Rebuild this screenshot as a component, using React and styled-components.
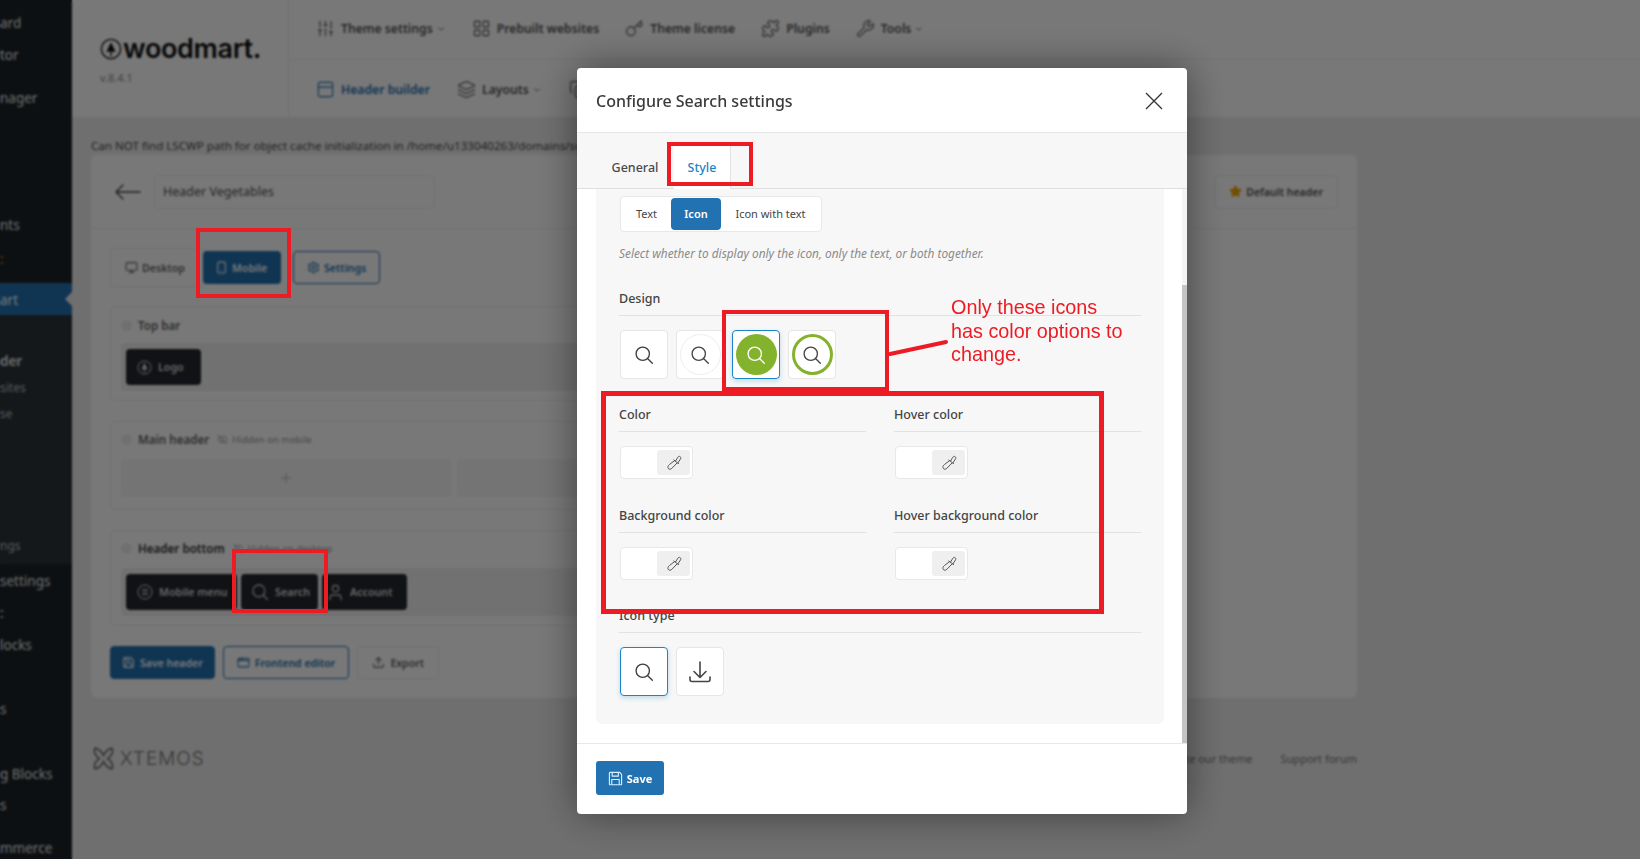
import React from "react";
import styled, { createGlobalStyle } from "styled-components";
import {
  AppWindow,
  ChevronDown,
  Copy,
  EyeOff,
  Key,
  Layers,
  LayoutGrid,
  Monitor,
  PanelTop,
  Plus,
  Puzzle,
  Save,
  Settings,
  SlidersVertical,
  Smartphone,
  Star,
  Upload,
  User,
  Wrench,
} from "lucide-react";

const GlobalStyle = createGlobalStyle`
  html, body {
    margin: 0;
    padding: 0;
    height: 100%;
    overflow: hidden;
    background: #ececec;
  }
  * { box-sizing: border-box; }
  body {
    font-family: "Noto Sans", "Open Sans", sans-serif;
    color: #3d3d3d;
  }
`;

const sideTop = [
  { label: "ard", gap: 13 },
  { label: "tor", gap: 12 },
  { label: "nager", gap: 23 },
  { label: "nts", gap: 107 },
  { label: ":", gap: 14, orange: true },
];
const sideSub = [
  { label: "der", gap: 36, strong: true },
  { label: "sites", gap: 7, small: true },
  { label: "se", gap: 6, small: true },
  { label: "ngs", gap: 112, small: true },
];
const sideBottom = [
  { label: "settings", gap: 7 },
  { label: ":", gap: 12 },
  { label: "locks", gap: 12 },
  { label: "s", gap: 44 },
  { label: "g Blocks", gap: 45 },
  { label: "s", gap: 11 },
  { label: "mmerce", gap: 23 },
];

const Page = styled.div`
  display: flex;
  width: 1640px;
  height: 859px;
  overflow: hidden;
`;

const Sidebar = styled.aside`
  flex: 0 0 72px;
  background: #1d2327;
  color: #e8eaeb;
  font-size: 13.5px;
  overflow: hidden;
`;

const SideItem = styled.div`
  height: 20px;
  line-height: 20px;
  white-space: nowrap;
  margin-top: ${(p) => p.$gap}px;
  font-size: ${(p) => (p.$small ? "12px" : "13.5px")};
  font-weight: ${(p) => (p.$strong ? 600 : 400)};
  color: ${(p) => (p.$orange ? "#d9822b" : p.$small ? "#b8bcc0" : "#e8eaeb")};
`;

const SideActive = styled.div`
  position: relative;
  height: 32px;
  line-height: 35px;
  margin-top: 14px;
  background: #2271b1;
  color: #fff;

  &::after {
    content: "";
    position: absolute;
    right: 0;
    top: 9px;
    border: 7px solid transparent;
    border-right-color: #ececec;
    border-left-width: 0;
  }
`;

const SideSub = styled.div`
  height: 249px;
  padding-bottom: 8px;
  background: #2c3338;
  overflow: hidden;
`;

const Main = styled.main`
  flex: 1;
  min-width: 0;
`;

const TopHeader = styled.header`
  display: flex;
  height: 117px;
  background: #fff;
`;

const Brand = styled.div`
  flex: 0 0 217px;
  padding: 34px 0 0 28px;
  border-right: 1px solid #eee;
`;

const LogoRow = styled.div`
  display: flex;
  align-items: center;
  gap: 1px;
  height: 30px;
  color: #111;
`;

const LogoText = styled.span`
  font-family: Inter, "Noto Sans", sans-serif;
  font-size: 27px;
  font-weight: 600;
  letter-spacing: -0.35px;
  line-height: 30px;
`;

const Version = styled.div`
  margin-top: 6px;
  font-size: 11px;
  line-height: 16px;
  color: #8f8f8f;
`;

const NavColumn = styled.div`
  flex: 1;
  display: flex;
  flex-direction: column;
`;

const NavRow = styled.nav`
  display: flex;
  align-items: center;
  height: ${(p) => p.$height}px;
  padding: ${(p) => (p.$line ? "0 0 2px 27px" : "2px 0 0 27px")};
  gap: ${(p) => p.$gap}px;
  border-bottom: ${(p) => (p.$line ? "1px solid #eee" : "none")};
`;

const NavItem = styled.div`
  display: flex;
  align-items: center;
  gap: 6px;
  font-size: 12.2px;
  font-weight: 600;
  white-space: nowrap;
  color: ${(p) => (p.$active ? "#2271b1" : "#555")};

  & > svg + svg {
    margin-left: -3px;
  }
`;

const Content = styled.div`
  padding: 20px 0 0 19px;
`;

const Notice = styled.div`
  height: 18px;
  line-height: 18px;
  font-size: 11.6px;
  white-space: nowrap;
  color: #4a4a4a;
`;

const BuilderPanel = styled.section`
  width: 1266px;
  background: #fff;
  border-radius: 6px;
`;

const BuilderTop = styled.div`
  display: flex;
  align-items: center;
  height: 74px;
  padding: 0 19px 0 24px;
  border-bottom: 1px solid #eee;
`;

const TitleInput = styled.div`
  width: 281px;
  height: 34px;
  margin-left: 13px;
  padding-left: 8px;
  border: 1px solid #eee;
  border-radius: 4px;
  font-size: 12.5px;
  line-height: 32px;
  color: #555;
`;

const DefaultButton = styled.div`
  display: flex;
  align-items: center;
  gap: 4px;
  height: 34px;
  margin-left: auto;
  padding: 0 14px;
  border: 1px solid #eee;
  border-radius: 4px;
  font-size: 10.5px;
  font-weight: 600;
  color: #555;
`;

const BuilderBody = styled.div`
  padding: 19px 200px 19px 19px;
`;

const ViewTabs = styled.div`
  display: flex;
  align-items: center;
  height: 39px;
`;

const DesktopTab = styled.div`
  display: flex;
  align-items: center;
  gap: 4px;
  width: 96px;
  height: 39px;
  padding-left: 14px;
  border: 1px solid #eee;
  border-radius: 4px;
  font-size: 10.6px;
  font-weight: 600;
  color: #666;
`;

const MobileTab = styled.div`
  display: flex;
  align-items: center;
  gap: 4px;
  width: 78px;
  height: 33px;
  margin-left: -3px;
  padding-left: 12px;
  border-radius: 4px;
  background: #2271b1;
  font-size: 10.6px;
  font-weight: 600;
  color: #fff;
`;

const SettingsTab = styled.div`
  display: flex;
  align-items: center;
  gap: 4px;
  width: 87px;
  height: 33px;
  margin-left: 12px;
  padding-left: 13px;
  border: 1px solid #2271b1;
  border-radius: 4px;
  font-size: 10.6px;
  font-weight: 600;
  color: #2271b1;
`;

const Section = styled.div`
  margin-top: ${(p) => p.$gap}px;
  padding: ${(p) => p.$top}px 10px ${(p) => p.$bottom}px;
  border: 1px solid #eee;
  border-radius: 6px;
`;

const SectionTitle = styled.div`
  display: flex;
  align-items: center;
  height: 20px;
  font-size: 11.6px;
  font-weight: 600;
  color: ${(p) => (p.$dark ? "#333" : "#666")};
`;

const Dot = styled.span`
  width: 11px;
  height: 11px;
  margin-right: 6px;
  border-radius: 50%;
  background: #eee;
`;

const HiddenNote = styled.span`
  display: flex;
  align-items: center;
  gap: 4px;
  margin-left: 8px;
  font-size: 9.5px;
  font-weight: 400;
  color: #999;
`;

const ElementRow = styled.div`
  display: flex;
  gap: 4px;
  margin-top: ${(p) => p.$gap}px;
  padding: 6px 5px;
  border-radius: 4px;
  background: #f0f0f0;
`;

const ElementButton = styled.div`
  display: flex;
  align-items: center;
  gap: ${(p) => p.$gap || 6}px;
  width: ${(p) => p.$width}px;
  height: 36px;
  padding-left: ${(p) => p.$pad || 11}px;
  border-radius: 4px;
  background: #23282d;
  font-size: 10.7px;
  font-weight: 600;
  white-space: nowrap;
  color: #d8d8d8;
`;

const EmptyRow = styled.div`
  display: flex;
  gap: 6px;
  margin-top: 10px;
`;

const EmptyCell = styled.div`
  display: flex;
  align-items: center;
  justify-content: center;
  flex: ${(p) => (p.$wide ? 1 : "0 0 330px")};
  height: 38px;
  border-radius: 4px;
  background: #f6f6f6;
  color: #999;
`;

const ActionRow = styled.div`
  display: flex;
  gap: 8px;
  margin-top: 20px;
`;

const ActionButton = styled.div`
  display: flex;
  align-items: center;
  gap: 5px;
  height: 33px;
  padding: 0 ${(p) => p.$pad}px;
  border: 1px solid ${(p) => (p.$kind === "plain" ? "#eee" : "#2271b1")};
  border-radius: 4px;
  background: ${(p) => (p.$kind === "solid" ? "#2271b1" : "#fff")};
  font-size: 10.5px;
  font-weight: 600;
  color: ${(p) =>
    p.$kind === "solid" ? "#fff" : p.$kind === "plain" ? "#666" : "#2271b1"};
`;

const Foot = styled.footer`
  display: flex;
  align-items: center;
  width: 1266px;
  height: 47px;
  margin-top: 37px;
  border-bottom: 1px solid #e4e4e4;
`;

const XtemosName = styled.span`
  margin-left: 4px;
  font-family: Inter, sans-serif;
  font-size: 19px;
  font-weight: 300;
  letter-spacing: 1px;
  color: #777;
`;

const FootLinks = styled.div`
  display: flex;
  gap: 28px;
  margin-left: auto;
  font-size: 11px;
  color: #777;
`;

/* modal */
const Overlay = styled.div`
  position: fixed;
  inset: 0;
  padding: 68px 0 0 577px;
  background: rgba(0, 0, 0, 0.53);
  backdrop-filter: blur(1.2px);
`;

const Modal = styled.div`
  display: flex;
  flex-direction: column;
  width: 610px;
  height: 746px;
  border-radius: 4px;
  background: #fff;
  box-shadow: 0 0 40px rgba(0, 0, 0, 0.45);
  overflow: hidden;
`;

const ModalHead = styled.div`
  display: flex;
  align-items: center;
  justify-content: space-between;
  flex: 0 0 65px;
  padding: 1px 24px 0 19px;
  border-bottom: 1px solid #e6e6e6;
`;

const ModalTitle = styled.h2`
  margin: 0;
  font-size: 16px;
  font-weight: 500;
  color: #3a3a3a;
`;

const TabBar = styled.div`
  display: flex;
  align-items: flex-end;
  flex: 0 0 56px;
  padding-left: 19px;
  background: #f7f7f7;
  border-bottom: 1px solid #dedede;
`;

const Tab = styled.div`
  width: ${(p) => p.$width}px;
  height: 44px;
  margin-bottom: -1px;
  padding-top: 13px;
  text-align: center;
  font-size: 12.5px;
  line-height: 20px;
  font-weight: 500;
  color: ${(p) => (p.$active ? "#1b84c4" : "#4a4a4a")};
  background: ${(p) => (p.$active ? "#fff" : "transparent")};
  border-right: ${(p) => (p.$active ? "1px solid #e2e2e2" : "none")};
`;

const BodyWrap = styled.div`
  display: flex;
  flex: 0 0 554px;
  min-height: 0;
`;

const ScrollArea = styled.div`
  flex: 1;
  padding: 0 18px 0 19px;
  overflow: hidden;
`;

const Track = styled.div`
  flex: 0 0 5px;
  padding-top: 96px;
  background: #f4f4f4;
`;

const Thumb = styled.div`
  height: 458px;
  background: #c4c4c4;
`;

const OptionsPanel = styled.div`
  height: 535px;
  padding: 7px 23px 0;
  border-radius: 0 0 6px 6px;
  background: #f7f7f7;
`;

const Segmented = styled.div`
  display: inline-flex;
  align-items: center;
  width: 202px;
  height: 36px;
  margin-left: 1px;
  padding: 1px;
  border: 1px solid #e8e8e8;
  border-radius: 4px;
  background: #fff;
`;

const Segment = styled.div`
  width: ${(p) => p.$width}px;
  height: 32px;
  border-radius: 4px;
  text-align: center;
  font-size: 11px;
  line-height: 32px;
  font-weight: ${(p) => (p.$active ? 600 : 400)};
  color: ${(p) => (p.$active ? "#fff" : "#444")};
  background: ${(p) => (p.$active ? "#2271b1" : "transparent")};
`;

const Hint = styled.p`
  margin: 13px 0 0;
  font-size: 11.85px;
  line-height: 16px;
  font-style: italic;
  color: #8a8a8a;
`;

const FieldGrid = styled.div`
  display: grid;
  grid-template-columns: 247px 247px;
  column-gap: 28px;
`;

const Field = styled.div`
  margin-top: ${(p) => p.$gap || 25}px;
`;

const FieldLabel = styled.div`
  height: 28px;
  font-size: 12.5px;
  line-height: 22px;
  font-weight: 500;
  color: #444;
  border-bottom: 1px solid #e2e2e2;
`;

const TileRow = styled.div`
  display: flex;
  gap: 8px;
  margin-top: 14px;
  padding-left: 1px;
`;

const Tile = styled.div`
  display: flex;
  align-items: center;
  justify-content: center;
  width: 48px;
  height: 49px;
  border: 1px solid ${(p) => (p.$active ? "#1b84c4" : "#e6e6e6")};
  border-radius: 4px;
  background: #fff;
  box-shadow: ${(p) => (p.$active ? "0 2px 5px rgba(27,132,196,.25)" : "none")};
`;

const Disc = styled.div`
  display: flex;
  align-items: center;
  justify-content: center;
  flex: 0 0 41px;
  height: 41px;
  border-radius: 50%;
  background: ${(p) => (p.$kind === "fill" ? "#83b32d" : "#fff")};
  border: ${(p) =>
    p.$kind === "ring"
      ? "3px solid #83b32d"
      : p.$kind === "thin"
        ? "1px solid #eee"
        : "none"};
  color: ${(p) => (p.$kind === "fill" ? "#fff" : "#444")};
`;

const Swatch = styled.div`
  display: flex;
  justify-content: flex-end;
  width: 73px;
  height: 33px;
  margin: 14px 0 0 1px;
  padding: 3px 2px 3px 3px;
  border: 1px solid #e8e8e8;
  border-radius: 4px;
  background: #fff;
`;

const PickerButton = styled.div`
  display: flex;
  align-items: center;
  justify-content: center;
  width: 33px;
  height: 100%;
  border-radius: 3px;
  background: #efefef;
  color: #555;
`;

const ModalFoot = styled.div`
  display: flex;
  align-items: flex-start;
  flex: 1;
  padding: 17px 19px;
  border-top: 1px solid #e8e8e8;
`;

const SaveButton = styled.div`
  display: flex;
  align-items: center;
  justify-content: center;
  gap: 4px;
  width: 68px;
  height: 34px;
  border-radius: 3px;
  background: #2271b1;
  font-size: 11px;
  font-weight: 700;
  color: #fff;
`;

/* annotations painted over the screenshot */
const RedBox = styled.div`
  position: fixed;
  left: ${(p) => p.$x}px;
  top: ${(p) => p.$y}px;
  width: ${(p) => p.$w}px;
  height: ${(p) => p.$h}px;
  border: ${(p) => p.$stroke || 4}px solid #ed1c24;
`;

const CalloutText = styled.div`
  position: fixed;
  left: 951px;
  top: 296px;
  width: 178px;
  font-family: "Liberation Sans", Arial, sans-serif;
  font-size: 19.8px;
  line-height: 23.5px;
  color: #ed1c24;
`;

const CalloutArrow = styled.svg`
  position: fixed;
  left: 885px;
  top: 335px;
`;

const SearchGlyph = ({ size = 20, width = 1.6 }) => (
  <svg width={size} height={size} viewBox="0 0 24 24" fill="none" stroke="currentColor" strokeWidth={width} strokeLinecap="round">
    <circle cx="10.5" cy="10.5" r="8" />
    <path d="M16.5 16.5 22 22" />
  </svg>
);

const CloseGlyph = () => (
  <svg width="18" height="18" viewBox="0 0 18 18" fill="none" stroke="#333" strokeWidth="1.3">
    <path d="M1 1 17 17M17 1 1 17" />
  </svg>
);

const BackArrow = () => (
  <svg width="26" height="18" viewBox="0 0 26 18" fill="none" stroke="#444" strokeWidth="1.4" strokeLinecap="round" strokeLinejoin="round">
    <path d="M1 9h24M8 2 1 9l7 7" />
  </svg>
);

const Dropper = () => (
  <svg width="16" height="16" viewBox="0 0 16 16" fill="none" stroke="currentColor" strokeWidth="1" strokeLinejoin="round" strokeLinecap="round">
    <path d="M9.6 5.9 11.8 2.3c.5-.9 1.6-1.2 2.3-.7.8.5.9 1.5.4 2.3L11.9 7.9" />
    <path d="M7.8 5 12.6 8.6" />
    <path d="M8.6 5.6 3.6 9.4c-1.5 1.1-2.2 2.7-1.4 3.9.8 1.2 2.4 1.2 3.6.1l4.9-5.1" />
  </svg>
);

const FloppyGlyph = () => (
  <svg width="15" height="15" viewBox="0 0 16 16" fill="none" stroke="#dcefff" strokeWidth="1.2" strokeLinejoin="round">
    <path d="M2 1.5h10.5l2 2V14a.6.6 0 0 1-.6.6H2.1a.6.6 0 0 1-.6-.6V2z" />
    <path d="M4.5 1.5v4h6.5v-4M4 14.5V9h8v5.5" />
  </svg>
);

const MenuBadge = () => (
  <svg width="16" height="16" viewBox="0 0 16 16" fill="none" stroke="currentColor" strokeWidth="1">
    <circle cx="8" cy="8" r="7" />
    <path d="M5 5.5h6M5 8h6M5 10.5h6" />
  </svg>
);

const DownloadGlyph = () => (
  <svg width="24" height="24" viewBox="0 0 24 24" fill="none" stroke="#444" strokeWidth="1.6" strokeLinecap="round" strokeLinejoin="round">
    <path d="M12 2v15M6 11.5l6 6 6-6" />
    <path d="M2 17v2.5c0 1.2.8 2 2 2h16c1.2 0 2-.8 2-2V17" />
  </svg>
);

const TreeLogo = ({ size, color = "#111" }) => (
  <svg width={size} height={size} viewBox="0 0 24 24" fill="none" stroke={color} strokeWidth="1.5">
    <circle cx="12" cy="12" r="10.5" />
    <path d="M12 4.5 17 15H7z" fill={color} stroke="none" />
    <path d="M12 15v5" />
  </svg>
);

const XtemosLogo = () => (
  <svg width="25" height="25" viewBox="0 0 24 24" fill="none" stroke="#777" strokeWidth="1.8">
    <path d="M4 2c5 1 7 5 8 7 1-2 3-6 8-7 2 4-1 8-4 10 3 2 6 6 4 10-5-1-7-5-8-7-1 2-3 6-8 7-2-4 1-8 4-10C5 10 2 6 4 2z" />
  </svg>
);

const FieldBlock = ({ label, gap }) => (
  <Field $gap={gap}>
    <FieldLabel>{label}</FieldLabel>
    <Swatch>
      <PickerButton>
        <Dropper />
      </PickerButton>
    </Swatch>
  </Field>
);

const App = () => {
  return (
    <>
      <GlobalStyle />
      <Page>
        <Sidebar>
          {sideTop.map((i, n) => (
            <SideItem key={n} $gap={i.gap} $orange={i.orange}>
              {i.label}
            </SideItem>
          ))}
          <SideActive>art</SideActive>
          <SideSub>
            {sideSub.map((i, n) => (
              <SideItem key={n} $gap={i.gap} $small={i.small} $strong={i.strong}>
                {i.label}
              </SideItem>
            ))}
          </SideSub>
          {sideBottom.map((i, n) => (
            <SideItem key={n} $gap={i.gap}>
              {i.label}
            </SideItem>
          ))}
        </Sidebar>
        <Main>
          <TopHeader>
            <Brand>
              <LogoRow>
                <TreeLogo size={22} />
                <LogoText>woodmart.</LogoText>
              </LogoRow>
              <Version>v.8.4.1</Version>
            </Brand>
            <NavColumn>
              <NavRow $height={60} $gap={26} $line>
                <NavItem>
                  <SlidersVertical size={19} strokeWidth={1.4} />
                  Theme settings <ChevronDown size={10} />
                </NavItem>
                <NavItem>
                  <LayoutGrid size={19} strokeWidth={1.4} />
                  Prebuilt websites
                </NavItem>
                <NavItem>
                  <Key size={19} strokeWidth={1.4} />
                  Theme license
                </NavItem>
                <NavItem>
                  <Puzzle size={19} strokeWidth={1.4} />
                  Plugins
                </NavItem>
                <NavItem>
                  <Wrench size={19} strokeWidth={1.4} />
                  Tools <ChevronDown size={10} />
                </NavItem>
              </NavRow>
              <NavRow $height={57} $gap={27}>
                <NavItem $active>
                  <PanelTop size={19} strokeWidth={1.4} />
                  Header builder
                </NavItem>
                <NavItem>
                  <Layers size={19} strokeWidth={1.4} />
                  Layouts <ChevronDown size={10} />
                </NavItem>
                <NavItem>
                  <Copy size={19} strokeWidth={1.4} />
                </NavItem>
              </NavRow>
            </NavColumn>
          </TopHeader>
          <Content>
            <Notice>
              Can NOT find LSCWP path for object cache initialization in /home/u133040263/domains/su
            </Notice>
            <BuilderPanel>
              <BuilderTop>
                <BackArrow />
                <TitleInput>Header Vegetables</TitleInput>
                <DefaultButton>
                  <Star size={13} fill="#f0a500" color="#f0a500" />
                  Default header
                </DefaultButton>
              </BuilderTop>
              <BuilderBody>
                <ViewTabs>
                  <DesktopTab>
                    <Monitor size={13} />
                    Desktop
                  </DesktopTab>
                  <MobileTab>
                    <Smartphone size={13} />
                    Mobile
                  </MobileTab>
                  <SettingsTab>
                    <Settings size={13} />
                    Settings
                  </SettingsTab>
                </ViewTabs>
                <Section $gap={19} $top={8} $bottom={9}>
                  <SectionTitle>
                    <Dot />
                    Top bar
                  </SectionTitle>
                  <ElementRow $gap={8}>
                    <ElementButton $width={75}>
                      <TreeLogo size={15} color="#d8d8d8" />
                      Logo
                    </ElementButton>
                  </ElementRow>
                </Section>
                <Section $gap={20} $top={7} $bottom={12}>
                  <SectionTitle>
                    <Dot />
                    Main header
                    <HiddenNote>
                      <EyeOff size={11} />
                      Hidden on mobile
                    </HiddenNote>
                  </SectionTitle>
                  <EmptyRow>
                    <EmptyCell>
                      <Plus size={16} strokeWidth={1} />
                    </EmptyCell>
                    <EmptyCell $wide />
                  </EmptyRow>
                </Section>
                <Section $gap={20} $top={7} $bottom={9}>
                  <SectionTitle $dark>
                    <Dot />
                    Header bottom
                    <HiddenNote>
                      <EyeOff size={11} />
                      Hidden on desktop
                    </HiddenNote>
                  </SectionTitle>
                  <ElementRow $gap={10}>
                    <ElementButton $width={111}>
                      <MenuBadge />
                      Mobile menu
                    </ElementButton>
                    <ElementButton $width={77} $pad={10}>
                      <SearchGlyph size={18} width={1.5} />
                      Search
                    </ElementButton>
                    <ElementButton $width={85} $pad={4} $gap={5}>
                      <User size={19} strokeWidth={1.4} />
                      Account
                    </ElementButton>
                  </ElementRow>
                </Section>
                <ActionRow>
                  <ActionButton $kind="solid" $pad={11}>
                    <Save size={13} />
                    Save header
                  </ActionButton>
                  <ActionButton $kind="outline" $pad={13}>
                    <AppWindow size={13} />
                    Frontend editor
                  </ActionButton>
                  <ActionButton $kind="plain" $pad={14}>
                    <Upload size={13} />
                    Export
                  </ActionButton>
                </ActionRow>
              </BuilderBody>
            </BuilderPanel>
            <Foot>
              <XtemosLogo />
              <XtemosName>XTEMOS</XtemosName>
              <FootLinks>
                <span>Rate our theme</span>
                <span>Support forum</span>
              </FootLinks>
            </Foot>
          </Content>
        </Main>
      </Page>

      <Overlay>
        <Modal>
          <ModalHead>
            <ModalTitle>Configure Search settings</ModalTitle>
            <CloseGlyph />
          </ModalHead>
          <TabBar>
            <Tab $width={78}>General</Tab>
            <Tab $width={57} $active>
              Style
            </Tab>
          </TabBar>
          <BodyWrap>
            <ScrollArea>
              <OptionsPanel>
                <Segmented>
                  <Segment $width={49}>Text</Segment>
                  <Segment $width={50} $active>
                    Icon
                  </Segment>
                  <Segment $width={99}>Icon with text</Segment>
                </Segmented>
                <Hint>Select whether to display only the icon, only the text, or both together.</Hint>
                <Field $gap={27}>
                  <FieldLabel>Design</FieldLabel>
                  <TileRow>
                    <Tile>
                      <SearchGlyph />
                    </Tile>
                    <Tile>
                      <Disc $kind="thin">
                        <SearchGlyph />
                      </Disc>
                    </Tile>
                    <Tile $active>
                      <Disc $kind="fill">
                        <SearchGlyph />
                      </Disc>
                    </Tile>
                    <Tile>
                      <Disc $kind="ring">
                        <SearchGlyph />
                      </Disc>
                    </Tile>
                  </TileRow>
                </Field>
                <FieldGrid>
                  <FieldBlock label="Color" />
                  <FieldBlock label="Hover color" />
                  <FieldBlock label="Background color" gap={26} />
                  <FieldBlock label="Hover background color" gap={26} />
                </FieldGrid>
                <Field>
                  <FieldLabel>Icon type</FieldLabel>
                  <TileRow>
                    <Tile $active>
                      <SearchGlyph />
                    </Tile>
                    <Tile>
                      <DownloadGlyph />
                    </Tile>
                  </TileRow>
                </Field>
              </OptionsPanel>
            </ScrollArea>
            <Track>
              <Thumb />
            </Track>
          </BodyWrap>
          <ModalFoot>
            <SaveButton>
              <FloppyGlyph />
              Save
            </SaveButton>
          </ModalFoot>
        </Modal>
      </Overlay>

      <RedBox $x={196} $y={228} $w={95} $h={70} />
      <RedBox $x={232} $y={549} $w={96} $h={64} />
      <RedBox $x={667} $y={142} $w={86} $h={44} />
      <RedBox $x={722} $y={310} $w={167} $h={81} />
      <RedBox $x={601} $y={391} $w={503} $h={223} $stroke={5} />
      <CalloutText>Only these icons has color options to change.</CalloutText>
      <CalloutArrow width="64" height="24" viewBox="0 0 64 24">
        <path d="M5 19 61 7" stroke="#ed1c24" strokeWidth="4" strokeLinecap="round" />
      </CalloutArrow>
    </>
  );
};

export default App;
